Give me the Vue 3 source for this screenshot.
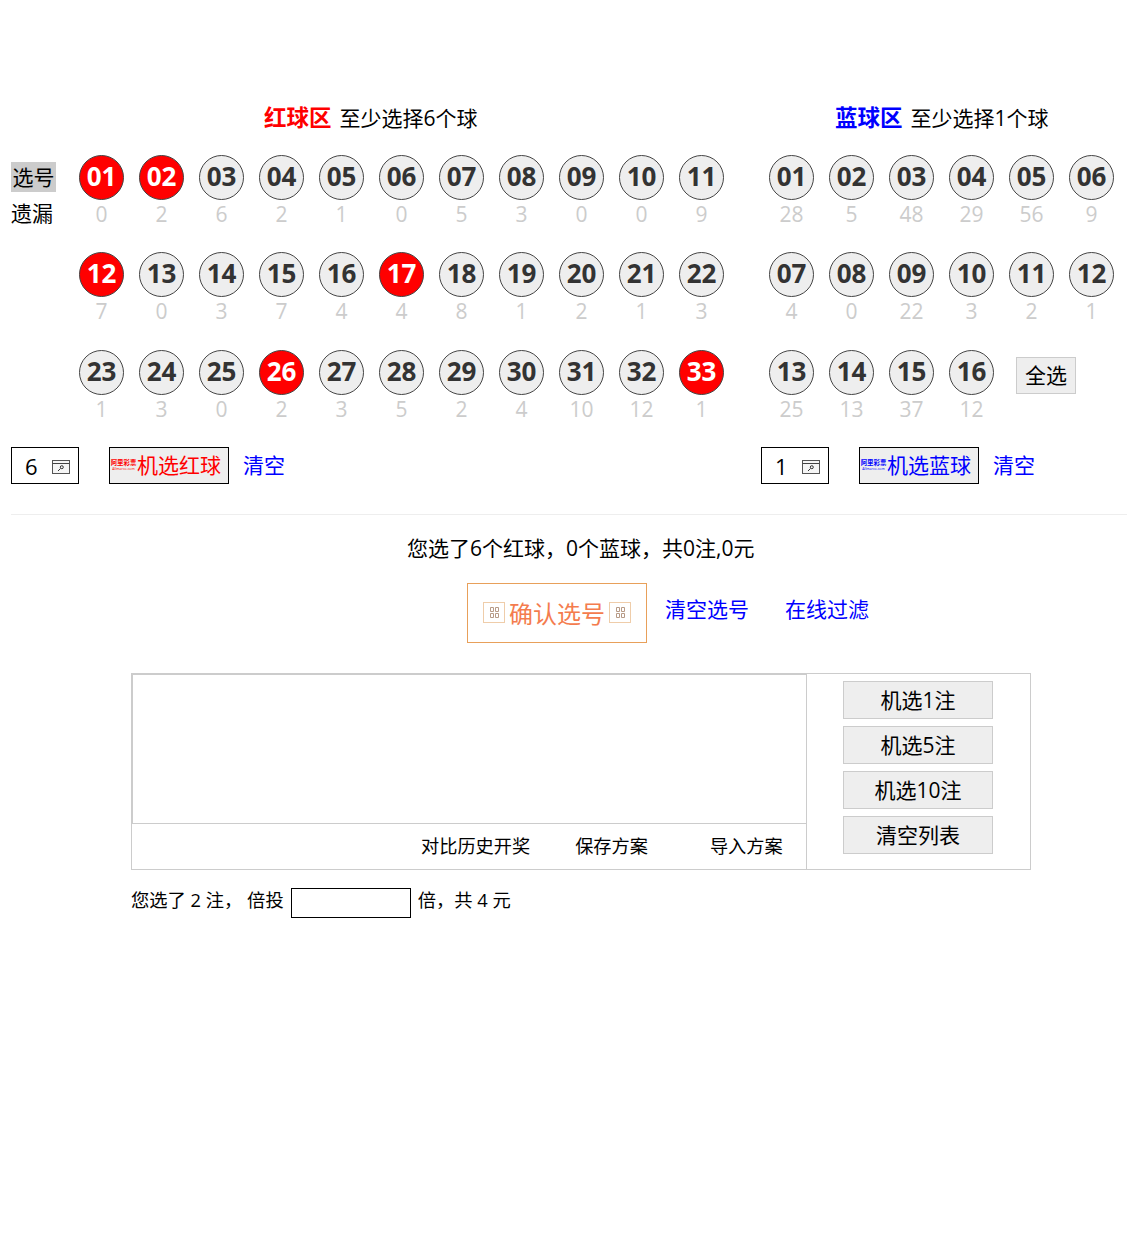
<script setup>
const redPicked = [1, 2, 12, 17, 26, 33];
const redMiss = [0, 2, 6, 2, 1, 0, 5, 3, 0, 0, 9, 7, 0, 3, 7, 4, 4, 8, 1, 2, 1, 3, 1, 3, 0, 2, 3, 5, 2, 4, 10, 12, 1];
const blueMiss = [28, 5, 48, 29, 56, 9, 4, 0, 22, 3, 2, 1, 25, 13, 37, 12];

const pad = (n) => String(n).padStart(2, "0");

const redBalls = redMiss.map((miss, i) => ({
  num: pad(i + 1),
  miss,
  on: redPicked.includes(i + 1),
}));
const blueBalls = blueMiss.map((miss, i) => ({ num: pad(i + 1), miss }));
</script>

<template>
  <div class="page">
    <div class="zones">
      <div class="side">
        <span class="side-pick">选号</span>
        <span class="side-miss">遗漏</span>
      </div>

      <section class="zone red-zone">
        <h3 class="zone-title">
          <b class="red">红球区</b>
          <span>至少选择6个球</span>
        </h3>
        <div class="ball-grid red-grid">
          <div v-for="b in redBalls" :key="b.num" class="cell">
            <span class="ball" :class="{ on: b.on }">{{ b.num }}</span>
            <span class="miss">{{ b.miss }}</span>
          </div>
        </div>
      </section>

      <section class="zone blue-zone">
        <h3 class="zone-title">
          <b class="blue">蓝球区</b>
          <span>至少选择1个球</span>
        </h3>
        <div class="ball-grid blue-grid">
          <div v-for="b in blueBalls" :key="b.num" class="cell">
            <span class="ball">{{ b.num }}</span>
            <span class="miss">{{ b.miss }}</span>
          </div>
          <button class="all-btn">全选</button>
        </div>
      </section>
    </div>

    <div class="controls">
      <div class="control-group red-control">
        <div class="count-box">
          <span>6</span>
          <svg class="count-icon" viewBox="0 0 18 14" width="18" height="14">
            <rect x="0.5" y="0.5" width="17" height="13" fill="#f6f6f6" stroke="#555" />
            <path d="M0.5 3.5H17.5" stroke="#444" fill="none" />
            <path d="M6 11L8.5 8.5" stroke="#333" fill="none" />
            <circle cx="9.8" cy="7.2" r="1.5" fill="none" stroke="#333" />
          </svg>
        </div>
        <button class="rand-btn red">
          <span class="stamp">
            <b>阿里彩票</b>
            <i>Allmarco.com</i>
          </span>
          <span class="rand-text">机选红球</span>
        </button>
        <a class="link clear">清空</a>
      </div>

      <div class="control-group blue-control">
        <div class="count-box">
          <span>1</span>
          <svg class="count-icon" viewBox="0 0 18 14" width="18" height="14">
            <rect x="0.5" y="0.5" width="17" height="13" fill="#f6f6f6" stroke="#555" />
            <path d="M0.5 3.5H17.5" stroke="#444" fill="none" />
            <path d="M6 11L8.5 8.5" stroke="#333" fill="none" />
            <circle cx="9.8" cy="7.2" r="1.5" fill="none" stroke="#333" />
          </svg>
        </div>
        <button class="rand-btn blue">
          <span class="stamp">
            <b>阿里彩票</b>
            <i>Allmarco.com</i>
          </span>
          <span class="rand-text">机选蓝球</span>
        </button>
        <a class="link clear">清空</a>
      </div>
    </div>

    <hr class="divider" />

    <p class="summary">您选了6个红球，0个蓝球，共0注,0元</p>

    <div class="actions">
      <button class="confirm-btn">
        <svg class="qr" viewBox="0 0 22 21" width="22" height="21">
          <rect x="0.5" y="0.5" width="21" height="20" fill="#fff" stroke="#efcdaa" />
          <path d="M7.5 5.5h3v4h-3zM12.5 5.5h3v4h-3zM7.5 11.5h3v4h-3zM12.5 11.5h3v4h-3z" fill="none" stroke="#b79a86" />
        </svg>
        <span class="confirm-text">确认选号</span>
        <svg class="qr" viewBox="0 0 22 21" width="22" height="21">
          <rect x="0.5" y="0.5" width="21" height="20" fill="#fff" stroke="#efcdaa" />
          <path d="M7.5 5.5h3v4h-3zM12.5 5.5h3v4h-3zM7.5 11.5h3v4h-3zM12.5 11.5h3v4h-3z" fill="none" stroke="#b79a86" />
        </svg>
      </button>
      <a class="link clear-pick">清空选号</a>
      <a class="link">在线过滤</a>
    </div>

    <div class="list-box">
      <div class="list-main">
        <div class="list-area"></div>
        <div class="list-foot">
          <a>对比历史开奖</a>
          <a>保存方案</a>
          <a>导入方案</a>
        </div>
      </div>
      <div class="list-side">
        <button>机选1注</button>
        <button>机选5注</button>
        <button>机选10注</button>
        <button>清空列表</button>
      </div>
    </div>

    <div class="bet-line">
      <span>您选了 2 注， 倍投</span>
      <input class="bet-input" type="text" />
      <span>倍，共 4 元</span>
    </div>
  </div>
</template>

<style scoped>
.page {
  width: 1127px;
  height: 1237px;
  box-sizing: border-box;
  padding-top: 100px;
  color: #000;
  font-family: "Open Sans", "Noto Sans CJK SC", sans-serif;
  overflow: hidden;
}

.zones {
  display: flex;
  height: 330px;
}

.side {
  flex: none;
  width: 68px;
  margin-left: 11px;
  padding-top: 62px;
  display: flex;
  flex-direction: column;
  align-items: flex-start;
  font-size: 21px;
  line-height: 30px;
}

.side-pick {
  background: #ccc;
  width: 45px;
  height: 30px;
  text-align: center;
}

.side-miss {
  margin-top: 6px;
}

.zone-title {
  margin: 0;
  height: 55px;
  padding-bottom: 19px;
  box-sizing: border-box;
  display: flex;
  align-items: center;
  gap: 8px;
  font-size: 21px;
  font-weight: 400;
  line-height: 36px;
}

.zone-title b {
  font-size: 22.5px;
  font-weight: 700;
}

.red {
  color: #f00;
}

.blue {
  color: #00f;
}

.red-zone {
  width: 690px;
  flex: none;
}

.blue-zone {
  flex: none;
  width: 358px;
}

.red-zone .zone-title {
  padding-left: 185px;
}

.blue-zone .zone-title {
  padding-left: 66px;
}

.ball-grid {
  display: grid;
  grid-auto-rows: 97.4px;
}

.red-grid {
  grid-template-columns: repeat(11, 60px);
}

.blue-grid {
  grid-template-columns: repeat(6, 60px);
}

.cell {
  display: flex;
  flex-direction: column;
  align-items: flex-start;
}

.ball {
  width: 45px;
  height: 45px;
  box-sizing: border-box;
  border: 1px solid #444;
  border-radius: 50%;
  background: #eee;
  color: #333;
  font-size: 26px;
  font-weight: 700;
  line-height: 41px;
  text-align: center;
}

.ball.on {
  background: #f00;
  color: #fff;
}

.miss {
  width: 45px;
  color: #ccc;
  font-size: 21px;
  line-height: 28px;
  text-align: center;
}

.all-btn {
  width: 60px;
  height: 37px;
  margin: 7px 0 0 7px;
  padding: 0 0 2px;
  border: 1px solid #ccc;
  background: #eee;
  color: #000;
  font: inherit;
  font-size: 21px;
}

.controls {
  display: flex;
  height: 37px;
  margin-top: 17px;
}

.control-group {
  display: flex;
  align-items: center;
  height: 37px;
}

.red-control {
  width: 750px;
  padding-left: 11px;
  box-sizing: border-box;
}

.blue-control {
  padding-left: 11px;
}

.count-box {
  width: 68px;
  height: 37px;
  box-sizing: border-box;
  border: 1px solid #000;
  display: flex;
  align-items: center;
  padding-left: 13px;
  font-size: 22px;
  margin-right: 30px;
}

.count-icon {
  margin-left: 14px;
  margin-top: 2px;
}

.rand-btn {
  width: 120px;
  height: 37px;
  box-sizing: border-box;
  border: 1px solid #000;
  background: #eee;
  padding: 0;
  display: flex;
  align-items: center;
  font: inherit;
  font-size: 21px;
  white-space: nowrap;
}

.rand-btn.red {
  color: #f00;
}

.rand-btn.blue {
  color: #00f;
}

.rand-text {
  padding-bottom: 3px;
}

.stamp {
  width: 27px;
  flex: none;
  display: flex;
  flex-direction: column;
  align-items: center;
  line-height: 1;
}

.stamp b {
  font-size: 6.4px;
  font-weight: 700;
}

.stamp i {
  margin-top: 1px;
  font-size: 3.5px;
  font-style: normal;
}

.link {
  color: #00f;
  font-size: 21px;
  cursor: pointer;
}

.clear {
  margin-left: 14px;
  padding-bottom: 3px;
}

.divider {
  margin: 30px 0 0 11px;
  border: 0;
  border-top: 1px solid #eee;
}

.summary {
  margin: 18px 0 0;
  padding-left: 407px;
  font-size: 21px;
  line-height: 30px;
}

.actions {
  display: flex;
  height: 60px;
  margin-top: 20px;
  padding-left: 467px;
}

.confirm-btn {
  width: 180px;
  height: 60px;
  box-sizing: border-box;
  border: 1px solid #e8a05a;
  background: #fff;
  color: #f47c4e;
  padding: 0 0 0 15px;
  display: flex;
  align-items: center;
  gap: 4px;
  font: inherit;
  font-size: 24px;
}

.confirm-text {
  padding-bottom: 2px;
}

.qr {
  flex: none;
  margin-top: -2px;
}

.actions .link {
  line-height: 52px;
}

.clear-pick {
  margin: 0 36px 0 18px;
}

.list-box {
  display: flex;
  width: 900px;
  height: 197px;
  box-sizing: border-box;
  margin: 30px 0 0 131px;
  border: 1px solid #ccc;
}

.list-main {
  width: 675px;
  flex: none;
  border-right: 1px solid #ccc;
  box-sizing: border-box;
}

.list-area {
  height: 150px;
  box-sizing: border-box;
  border-top: 1px solid #ccc;
  border-left: 1px solid #ccc;
  border-bottom: 1px solid #ccc;
}

.list-foot {
  display: flex;
  height: 45px;
  align-items: center;
  padding: 0 0 3px 289px;
  box-sizing: border-box;
  font-size: 18.2px;
}

.list-foot a:nth-child(2) {
  margin-left: 45px;
}

.list-foot a:nth-child(3) {
  margin-left: 62px;
}

.list-side {
  flex: 1;
  display: flex;
  flex-direction: column;
  gap: 7px;
  padding: 7px 0 0 36px;
}

.list-side button {
  width: 150px;
  height: 38px;
  box-sizing: border-box;
  border: 1px solid #ccc;
  background: #eee;
  color: #000;
  padding: 0 0 3px;
  font: inherit;
  font-size: 21px;
}

.bet-line {
  display: flex;
  align-items: center;
  height: 30px;
  margin: 18px 0 0 131px;
  font-size: 18.3px;
}

.bet-line span {
  padding-bottom: 8px;
}

.bet-input {
  width: 120px;
  height: 30px;
  box-sizing: border-box;
  border: 1px solid #000;
  margin: 0 7px;
  padding: 0;
  background: #fff;
}
</style>

<style>
body {
  margin: 0;
  background: #fff;
}
</style>
